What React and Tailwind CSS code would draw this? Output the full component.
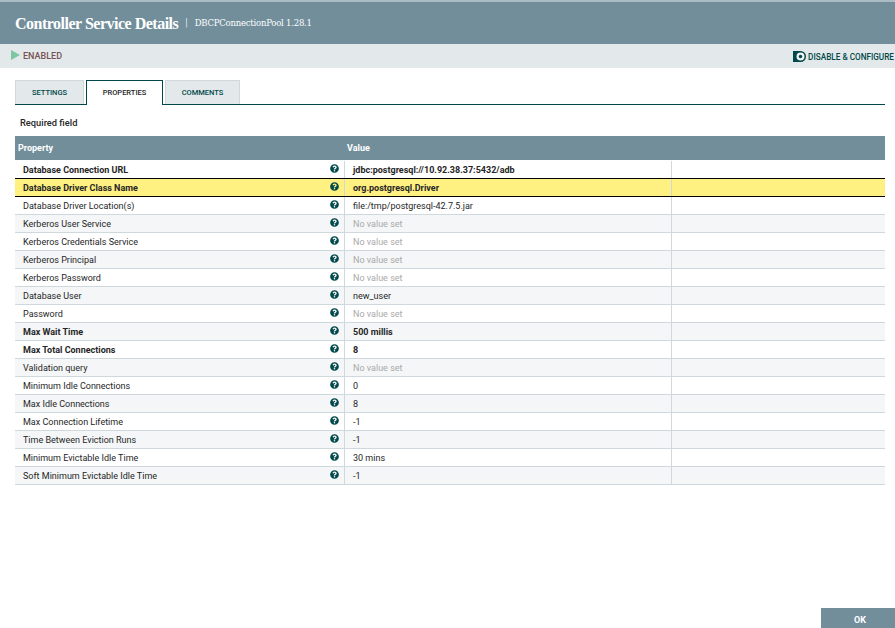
import React from "react";
import { FaQuestionCircle } from "react-icons/fa";

const rows = [
  ["Database Connection URL", "jdbc:postgresql://10.92.38.37:5432/adb", 1, 1],
  ["Database Driver Class Name", "org.postgresql.Driver", 1, 1],
  ["Database Driver Location(s)", "file:/tmp/postgresql-42.7.5.jar", 0, 1],
  ["Kerberos User Service", null, 0],
  ["Kerberos Credentials Service", null, 0],
  ["Kerberos Principal", null, 0],
  ["Kerberos Password", null, 0],
  ["Database User", "new_user", 0],
  ["Password", null, 0],
  ["Max Wait Time", "500 millis", 1],
  ["Max Total Connections", "8", 1],
  ["Validation query", null, 0],
  ["Minimum Idle Connections", "0", 0],
  ["Max Idle Connections", "8", 0],
  ["Max Connection Lifetime", "-1", 0],
  ["Time Between Eviction Runs", "-1", 0],
  ["Minimum Evictable Idle Time", "30 mins", 0],
  ["Soft Minimum Evictable Idle Time", "-1", 0],
];

function Row({ row, index }) {
  const [name, value, bold] = row;
  const selected = index === 1;
  const rowClass = selected
    ? "bg-[#fff082] border-y border-black h-[19px] -mt-px"
    : index % 2 === 1
      ? "bg-[#f4f6f7] border-b border-[#cfd8dc] h-[18px]"
      : "bg-white border-b border-[#cfd8dc] h-[18px]";
  return (
    <div className={`flex items-center text-[9px] text-[#262626] ${rowClass} ${bold ? "font-bold" : ""}`}>
      <div className="w-[330px] flex items-center justify-between pl-2 pr-[5px] pt-[3px] h-full border-r border-[#cfd8dc] shrink-0">
        <span>{name}</span>
        <FaQuestionCircle className="w-[9px] h-[9px] text-[#004849] -mt-[6px]" />
      </div>
      <div className="w-[327px] pl-2 pt-[3px] h-full flex items-center border-r border-[#cfd8dc] shrink-0">
        {value === null ? <span className="text-[#aaaaaa] font-normal">No value set</span> : <span>{value}</span>}
      </div>
    </div>
  );
}

function Tab({ label, active, w }) {
  return active ? (
    <div className={`${w} h-[25px] -mb-px bg-white border-[1.5px] border-b-0 border-[#004849] flex items-center justify-center text-[7.5px] font-medium text-[#262626] relative z-10`}>
      {label}
    </div>
  ) : (
    <div className={`${w} h-[24px] bg-[#e3e8eb] border border-b-0 border-[#cfd8dc] flex items-center justify-center text-[7.5px] font-medium text-[#004849]`}>
      {label}
    </div>
  );
}

export default function App() {
  return (
    <div className="w-[895px] h-[628px] bg-white flex flex-col overflow-hidden font-['Roboto',sans-serif] relative">
      <div className="h-[44px] bg-[#728e9b] border-t-2 border-[#aabbc3] flex items-center pl-[15px] text-white shrink-0">
        <span className="text-[16px] font-bold font-['Liberation_Serif',serif] tracking-[-0.5px] leading-none pt-px">Controller Service Details</span>
        <span className="mx-[7px] text-[11px] font-light">|</span>
        <span className="text-[8.5px] font-['DejaVu_Serif',serif] tracking-[-0.22px]">DBCPConnectionPool 1.28.1</span>
      </div>
      <div className="h-[24px] bg-[#e3e8eb] flex items-center justify-between shrink-0">
        <div className="flex items-center pl-[11px]">
          <svg width="9" height="10" viewBox="0 0 9 10" className="-mt-[3px]"><path d="M0 0 L9 5 L0 10 Z" fill="#7dc7a0" /></svg>
          <span className="ml-[3px] mt-[2px] text-[9px] font-medium text-[#775351]">ENABLED</span>
        </div>
        <div className="flex items-center text-[8.2px] font-medium text-[#004849] mt-[2px] mr-px">
          <svg width="13" height="11" viewBox="0 0 13 11" className="mr-[2px]">
            <path d="M0 0 H7.5 A5.5 5.5 0 0 1 7.5 11 H0 Z" fill="#004849" />
            <circle cx="7.5" cy="5.5" r="4" fill="#e3e8eb" />
            <circle cx="7.5" cy="5.5" r="2.9" fill="none" stroke="#ffffff" strokeWidth="1.3" strokeDasharray="1.3 0.8" />
            <circle cx="7.5" cy="5.5" r="1.7" fill="#004849" />
          </svg>
          <span className="whitespace-nowrap">DISABLE &amp; CONFIGURE</span>
        </div>
      </div>
      <div className="ml-[15px] w-[870px] mt-[12px] flex items-end gap-[2px] border-b border-[#004849] h-[25px]">
        <Tab label="SETTINGS" w="w-[69px]" />
        <Tab label="PROPERTIES" active w="w-[77px]" />
        <Tab label="COMMENTS" w="w-[75px]" />
      </div>
      <div className="ml-[20px] mt-[11px] mb-px h-[13px] flex items-center text-[9.3px] font-medium text-[#262626]">Required field</div>
      <div className="ml-[15px] w-[870px] mt-[6px]">
        <div className="h-[24px] bg-[#728e9b] flex items-center text-white text-[9px] font-bold mb-px pt-[2px]">
          <div className="w-[332px] pl-[3px]">Property</div>
          <div>Value</div>
        </div>
        {rows.map((r, i) => (
          <Row key={r[0]} row={r} index={i} />
        ))}
      </div>
      <div className="absolute right-0 bottom-0 w-[74px] h-[20px] bg-[#728e9b] flex items-center justify-center text-white text-[9px] font-bold pt-[5px] pl-1">OK</div>
    </div>
  );
}
